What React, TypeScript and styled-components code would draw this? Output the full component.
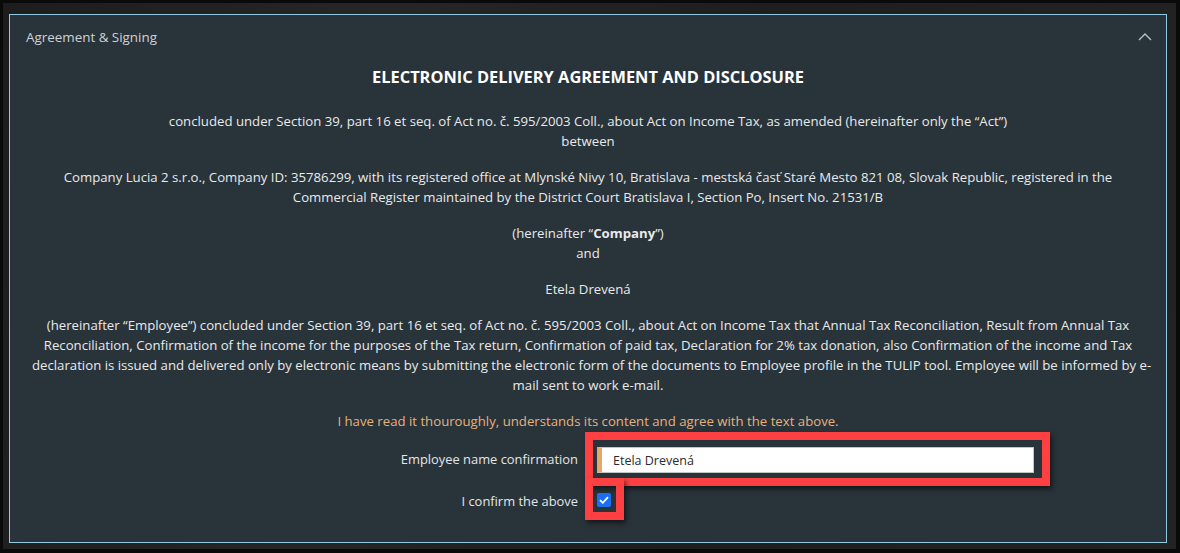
import styled, { createGlobalStyle } from "styled-components";

const GlobalStyle = createGlobalStyle`
  html, body {
    margin: 0;
    padding: 0;
    background: #0a0a0a;
    height: 553px;
    overflow: hidden;
  }
`;

const Frame = styled.div`
  margin: 3px 4px 4px 3px;
  height: 546px;
  box-sizing: border-box;
  padding: 11px 9px 6px 6px;
  background: linear-gradient(100deg, #1d1d1d 0%, #262626 30%, #1e1e1e 60%, #232323 100%);
`;

const Panel = styled.section`
  height: 529px;
  box-sizing: border-box;
  border: 1px solid #8fc9e2;
  background: #29333a;
  font-family: "Open Sans", "Noto Sans", sans-serif;
  color: #e8eaeb;
`;

const Header = styled.div`
  height: 44px;
  display: flex;
  align-items: center;
  justify-content: space-between;
  padding: 0 14px 0 16px;
  font-size: 13.4px;
  color: #cdd2d5;
`;

const Body = styled.div`
  padding: 8px 22px 0;
  text-align: center;
`;

const Title = styled.h1`
  margin: 0 0 24px;
  font-size: 16.4px;
  line-height: 20px;
  font-weight: 700;
  color: #ffffff;
`;

const Para = styled.p`
  margin: 0 0 16px;
  font-size: 13.2px;
  line-height: 20px;
  white-space: nowrap;
`;

const Notice = styled(Para)`
  margin-bottom: 1px;
  color: #e6b17d;
`;

const Form = styled.div`
  display: grid;
  grid-template-columns: 546px auto;
  column-gap: 7px;
  align-items: center;
  justify-items: start;
  text-align: right;
`;

const Label = styled.label<{ $lift?: boolean }>`
  justify-self: end;
  font-size: 12.9px;
  color: #e3e6e8;
  margin-top: ${(p) => (p.$lift ? "-4px" : "0")};
`;

const Highlight = styled.div<{ $overlap?: boolean }>`
  display: flex;
  border: 8px solid #ff4043;
  padding: 7px 8px 5px 4px;
  box-shadow: 2px 3px 5px rgba(0, 0, 0, 0.55);
  margin-top: ${(p) => (p.$overlap ? "-8px" : "0")};
  padding-right: ${(p) => (p.$overlap ? "5px" : "8px")};
`;

const NameInput = styled.div`
  width: 437px;
  height: 26px;
  box-sizing: border-box;
  display: flex;
  align-items: center;
  background: #ffffff;
  border: 1px solid #c4c4c4;
  border-left: 5px solid #e7a76c;
  padding-left: 11px;
  font-size: 12.5px;
  color: #2b2b2b;
`;

const Check = styled.span`
  width: 14px;
  height: 14px;
  border-radius: 2px;
  background: #1d6ff2;
  display: flex;
  align-items: center;
  justify-content: center;
`;

export default function App() {
  return (
    <>
      <GlobalStyle />
      <Frame>
        <Panel>
          <Header>
            <span>Agreement &amp; Signing</span>
            <svg width="14" height="8" viewBox="0 0 14 8">
              <polyline
                points="1,7 7,1 13,7"
                fill="none"
                stroke="#b9c1c6"
                strokeWidth="1.4"
              />
            </svg>
          </Header>
          <Body>
            <Title>ELECTRONIC DELIVERY AGREEMENT AND DISCLOSURE</Title>
            <Para>
              concluded under Section 39, part 16 et seq. of Act no. č. 595/2003
              Coll., about Act on Income Tax, as amended (hereinafter only the
              “Act”)
              <br />
              between
            </Para>
            <Para>
              Company Lucia 2 s.r.o., Company ID: 35786299, with its registered
              office at Mlynské Nivy 10, Bratislava - mestská časť Staré Mesto
              821 08, Slovak Republic, registered in the
              <br />
              Commercial Register maintained by the District Court Bratislava I,
              Section Po, Insert No. 21531/B
            </Para>
            <Para>
              (hereinafter “<b>Company</b>”)
              <br />
              and
            </Para>
            <Para>Etela Drevená</Para>
            <Para>
              (hereinafter “Employee”) concluded under Section 39, part 16 et
              seq. of Act no. č. 595/2003 Coll., about Act on Income Tax that
              Annual Tax Reconciliation, Result from Annual Tax
              <br />
              Reconciliation, Confirmation of the income for the purposes of the
              Tax return, Confirmation of paid tax, Declaration for 2% tax
              donation, also Confirmation of the income and Tax
              <br />
              declaration is issued and delivered only by electronic means by
              submitting the electronic form of the documents to Employee
              profile in the TULIP tool. Employee will be informed by e-
              <br />
              mail sent to work e-mail.
            </Para>
            <Notice>
              I have read it thouroughly, understands its content and agree with
              the text above.
            </Notice>
            <Form>
              <Label>Employee name confirmation</Label>
              <Highlight>
                <NameInput>Etela Drevená</NameInput>
              </Highlight>
              <Label $lift>I confirm the above</Label>
              <Highlight $overlap>
                <Check>
                  <svg width="10" height="8" viewBox="0 0 10 8">
                    <polyline
                      points="1,4.2 3.8,6.8 9,1.2"
                      fill="none"
                      stroke="#ffffff"
                      strokeWidth="1.8"
                    />
                  </svg>
                </Check>
              </Highlight>
            </Form>
          </Body>
        </Panel>
      </Frame>
    </>
  );
}
